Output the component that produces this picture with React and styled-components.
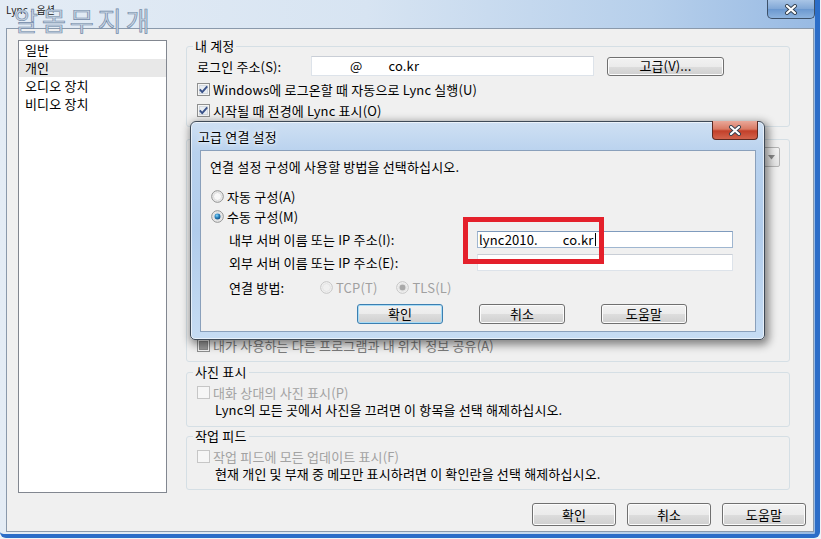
import styled, { createGlobalStyle } from "styled-components";

const GlobalStyle = createGlobalStyle`
  html, body { margin: 0; padding: 0; background: #eef3f8; }
  body {
    font-family: "Noto Sans CJK KR", "Noto Sans", sans-serif;
    font-size: 13px;
    letter-spacing: 0.15px;
    color: #000;
  }
  * { box-sizing: border-box; }
`;

const Screen = styled.div`
  position: relative;
  width: 821px;
  height: 539px;
  overflow: hidden;
  background: #eef3f8;
`;

const Window = styled.div`
  width: 820px;
  height: 538px;
  display: flex;
  flex-direction: column;
  background: linear-gradient(90deg, #e4ecf5 0%, #d7e4f2 45%, #b6cfeb 80%, #98bae3 100%);
  border-right: 5px solid #2b6dc8;
  border-bottom: 4px solid #2b6dc8;
  border-bottom-left-radius: 6px;
  border-bottom-right-radius: 6px;
`;

const TitleBar = styled.div`
  position: relative;
  height: 28px;
  display: flex;
  justify-content: space-between;
  align-items: flex-start;
`;

const TitleText = styled.div`
  padding: 4px 0 0 6px;
  font-size: 10px;
  line-height: 12px;
  color: #222;
`;

const Watermark = styled.div`
  position: absolute;
  left: 14px;
  top: 5px;
  font-size: 26px;
  line-height: 30px;
  letter-spacing: 4px;
  color: #c9d5e3;
  -webkit-text-stroke: 0.7px #7189a8;
  pointer-events: none;
`;

const WinClose = styled.div`
  width: 48px;
  height: 19px;
  border: 1px solid #3d5169;
  border-top: none;
  border-radius: 0 0 5px 5px;
  background: linear-gradient(#a9c5e6, #80a7d6 50%, #6b98cf 51%, #8db3de);
  display: flex;
  align-items: center;
  justify-content: center;
`;

const Client = styled.div`
  flex: 1;
  margin: 0 1px 2px 6px;
  border: 1px solid #8a99ab;
  background: #f0f0f0;
  display: flex;
  align-items: flex-start;
  gap: 19px;
  padding: 11px 6px 0 11px;
`;

const NavList = styled.div`
  width: 149px;
  height: 453px;
  border: 1px solid #828790;
  background: #fff;
`;

const NavItem = styled.div`
  height: 18px;
  line-height: 18px;
  padding-left: 6px;
  background: ${(p) => (p.$active ? "#e8e8e8" : "transparent")};
`;

const Content = styled.div`
  width: 620px;
  margin-top: -1px;
  display: flex;
  flex-direction: column;
`;

const Group = styled.fieldset`
  margin: ${(p) => p.$top || 0}px 16px 0 0;
  padding: ${(p) => p.$pad || "3px 9px 5px 10px"};
  border: 1px solid #d5dfe5;
  border-radius: 3px;
  min-inline-size: 0;
`;

const Legend = styled.legend`
  margin-left: -4px;
  padding: 0 2px;
  line-height: 14px;
`;

const FieldRow = styled.div`
  display: flex;
  align-items: center;
  height: ${(p) => p.$h || 20}px;
  margin-top: ${(p) => p.$mt || 0}px;
  padding-left: ${(p) => p.$indent || 0}px;
`;

const FieldLabel = styled.div`
  width: ${(p) => p.$w}px;
  flex: none;
  color: ${(p) => (p.$dim ? "#a0a0a0" : "#000")};
`;

const TextBox = styled.div`
  width: ${(p) => p.$w}px;
  height: ${(p) => p.$h}px;
  flex: none;
  background: #fff;
  border: 1px solid ${(p) => (p.$focus ? "#9fb6d0" : "#dde3ea")};
  border-top-color: ${(p) => (p.$focus ? "#7f9bbd" : "#c9ced6")};
  padding-left: ${(p) => p.$pad || 1}px;
  display: flex;
  align-items: center;
  line-height: 14px;
  white-space: pre;
`;

const Redact = styled.span`
  display: inline-block;
  width: ${(p) => p.$w}px;
`;

const Caret = styled.span`
  display: inline-block;
  width: 1px;
  height: 13px;
  margin-left: 1px;
  background: #000;
`;

const PushButton = styled.div`
  width: ${(p) => p.$w}px;
  height: ${(p) => p.$h || 23}px;
  flex: none;
  margin-left: ${(p) => p.$ml || 0}px;
  border: 1px solid ${(p) => (p.$focus ? "#3c7fb1" : "#707070")};
  border-radius: 3px;
  background: linear-gradient(#f2f2f2 0%, #ebebeb 50%, #dddddd 51%, #cfcfcf 100%);
  box-shadow: inset 0 0 0 1px ${(p) => (p.$focus ? "#a8dcf6" : "#fcfcfc")};
  display: flex;
  align-items: center;
  justify-content: center;
  line-height: 14px;
`;

const CheckRow = styled.div`
  display: flex;
  align-items: center;
  gap: 3px;
  height: ${(p) => p.$h || 21}px;
  margin-top: ${(p) => p.$mt || 0}px;
  color: ${(p) => (p.$dim ? "#a2a2a2" : p.$shade ? "#7c7c7c" : "#000")};
`;

const Note = styled.div`
  padding-left: 18px;
  line-height: 17px;
`;

const Spacer = styled.div`
  height: ${(p) => p.$h}px;
`;

const SelectRow = styled.div`
  display: flex;
  justify-content: flex-end;
`;

const Select = styled.div`
  width: 250px;
  height: 20px;
  border: 1px solid #b4b4b4;
  border-radius: 2px;
  background: linear-gradient(#f4f4f4, #e4e4e4);
  display: flex;
  justify-content: flex-end;
  align-items: center;
  padding-right: 3px;
`;

const ButtonRow = styled.div`
  display: flex;
  justify-content: flex-end;
  gap: 11px;
  margin-top: 13px;
`;

const Dialog = styled.div`
  position: absolute;
  left: 190px;
  top: 121px;
  width: 575px;
  height: 219px;
  border: 1px solid #3f4a57;
  border-radius: 6px 6px 5px 5px;
  background: linear-gradient(180deg, #cfe0f3 0%, #b9d2ee 14%, #b1cceb 50%, #c6dcf3 100%);
  box-shadow: 2px 3px 9px 2px rgba(0, 0, 0, 0.45), inset 0 0 0 1px rgba(255, 255, 255, 0.6);
  display: flex;
  flex-direction: column;
`;

const DialogTitle = styled.div`
  position: relative;
  height: 28px;
  display: flex;
  align-items: center;
  padding-left: 7px;
  text-shadow: 0 0 6px #fff, 0 0 3px #fff;
`;

const DialogClose = styled.div`
  position: absolute;
  top: -1px;
  right: 6px;
  width: 46px;
  height: 19px;
  border: 1px solid #5d2a22;
  border-top: none;
  border-radius: 0 0 4px 4px;
  background: linear-gradient(#e9a899 0%, #d97a64 45%, #c2402a 55%, #d2634c 100%);
  display: flex;
  align-items: center;
  justify-content: center;
`;

const DialogBody = styled.div`
  flex: 1;
  margin: 0 8px 7px 9px;
  border: 1px solid #8aa0bb;
  background: #f0f0f0;
  padding: 8px 0 0 9px;
  display: flex;
  flex-direction: column;
`;

const Line = styled.div`
  line-height: 16px;
`;

const RadioRow = styled.div`
  display: flex;
  align-items: center;
  gap: 3px;
  height: ${(p) => p.$h || 20}px;
  margin-top: ${(p) => p.$mt || 0}px;
  margin-left: ${(p) => p.$ml || 0}px;
  color: ${(p) => (p.$dim ? "#a0a0a0" : "#000")};
`;

const DialogButtons = styled.div`
  display: flex;
  gap: 36px;
  margin-top: 9px;
  padding-left: 147px;
`;

const Annotation = styled.div`
  position: absolute;
  left: 463px;
  top: 217px;
  width: 141px;
  height: 47px;
  border: 5px solid #e4202b;
  pointer-events: none;
`;

const CloseGlyph = ({ w = 14, h = 11 }) => (
  <svg width={w} height={h} viewBox="0 0 14 11">
    <path d="M3 2 L11 9 M11 2 L3 9" stroke="#33404f" strokeWidth="4" strokeLinecap="round" />
    <path d="M3 2 L11 9 M11 2 L3 9" stroke="#fff" strokeWidth="2.2" strokeLinecap="round" />
  </svg>
);

const CheckBox = ({ checked, disabled, mixed }) => (
  <svg width="13" height="13" viewBox="0 0 13 13">
    <rect x="0.5" y="0.5" width="12" height="12" fill="#f6f6f6" stroke={disabled ? "#c6c6c6" : "#8e8f8f"} />
    {!disabled && !mixed && <rect x="2.5" y="2.5" width="8" height="8" fill="#e9edf2" stroke="#d3d9e0" />}
    {mixed && <rect x="2.5" y="2.5" width="8" height="8" fill="#9a9a9a" stroke="#8a8a8a" />}
    {checked && (
      <path d="M2.8 6.4 L5.2 9.2 L10.2 3.3" fill="none" stroke="#3a528a" strokeWidth="1.9" strokeLinejoin="round" />
    )}
  </svg>
);

const Radio = ({ checked, disabled }) => (
  <svg width="13" height="13" viewBox="0 0 13 13">
    <defs>
      <radialGradient id="radioDot" cx="0.4" cy="0.35" r="0.7">
        <stop offset="0" stopColor="#8fdaf8" />
        <stop offset="0.45" stopColor="#2f8ac6" />
        <stop offset="1" stopColor="#0e4677" />
      </radialGradient>
    </defs>
    <circle cx="6.5" cy="6.5" r="5.8" fill={disabled ? "#f4f4f4" : "#eeeeee"} stroke={disabled ? "#c4c4c4" : "#8e8f8f"} />
    <circle cx="6.5" cy="6.5" r="4" fill={disabled ? "#f0f0f0" : "#f8f8f8"} stroke={disabled ? "#e0e0e0" : "#d6d6d6"} strokeWidth="0.8" />
    {checked && <circle cx="6.5" cy="6.5" r="3" fill={disabled ? "#a9a9a9" : "url(#radioDot)"} />}
  </svg>
);

const DropArrow = () => (
  <svg width="9" height="5" viewBox="0 0 9 5">
    <path d="M1 0 L8 0 L4.5 4.5 Z" fill="#8a8a8a" />
  </svg>
);

export default function App() {
  return (
    <Screen>
      <GlobalStyle />
      <Window>
        <TitleBar>
          <TitleText>Lync - 옵션</TitleText>
          <Watermark>알몸무지개</Watermark>
          <WinClose>
            <CloseGlyph />
          </WinClose>
        </TitleBar>
        <Client>
          <NavList>
            <NavItem>일반</NavItem>
            <NavItem $active>개인</NavItem>
            <NavItem>오디오 장치</NavItem>
            <NavItem>비디오 장치</NavItem>
          </NavList>
          <Content>
            <Group>
              <Legend>내 계정</Legend>
              <FieldRow>
                <FieldLabel $w={114}>로그인 주소(S):</FieldLabel>
                <TextBox $w={283} $h={20} $pad={2}>
                  <Redact $w={36} />@<Redact $w={26} />co.kr
                </TextBox>
                <PushButton $w={117} $h={19} $ml={13}>
                  고급(V)...
                </PushButton>
              </FieldRow>
              <CheckRow $mt={3}>
                <CheckBox checked />
                Windows에 로그온할 때 자동으로 Lync 실행(U)
              </CheckRow>
              <CheckRow>
                <CheckBox checked />
                시작될 때 전경에 Lync 표시(O)
              </CheckRow>
            </Group>

            <Group $top={12} $pad="7px 9px 5px 10px">
              <SelectRow>
                <Select>
                  <DropArrow />
                </Select>
              </SelectRow>
              <Spacer $h={168} />
              <CheckRow $shade>
                <CheckBox mixed />
                내가 사용하는 다른 프로그램과 내 위치 정보 공유(A)
              </CheckRow>
            </Group>

            <Group $top={3} $pad="4px 9px 8px 10px">
              <Legend>사진 표시</Legend>
              <CheckRow $h={18} $dim>
                <CheckBox disabled />
                대화 상대의 사진 표시(P)
              </CheckRow>
              <Note>Lync의 모든 곳에서 사진을 끄려면 이 항목을 선택 해제하십시오.</Note>
            </Group>

            <Group $top={2} $pad="4px 9px 7px 10px">
              <Legend>작업 피드</Legend>
              <CheckRow $h={18} $dim>
                <CheckBox disabled />
                작업 피드에 모든 업데이트 표시(F)
              </CheckRow>
              <Note>현재 개인 및 부재 중 메모만 표시하려면 이 확인란을 선택 해제하십시오.</Note>
            </Group>

            <ButtonRow>
              <PushButton $w={84}>확인</PushButton>
              <PushButton $w={84}>취소</PushButton>
              <PushButton $w={84}>도움말</PushButton>
            </ButtonRow>
          </Content>
        </Client>
      </Window>

      <Dialog>
        <DialogTitle>
          고급 연결 설정
          <DialogClose>
            <CloseGlyph />
          </DialogClose>
        </DialogTitle>
        <DialogBody>
          <Line>연결 설정 구성에 사용할 방법을 선택하십시오.</Line>
          <RadioRow $mt={11} $ml={1}>
            <Radio />
            자동 구성(A)
          </RadioRow>
          <RadioRow $ml={1}>
            <Radio checked />
            수동 구성(M)
          </RadioRow>
          <FieldRow $h={17} $mt={5} $indent={19}>
            <FieldLabel $w={248}>내부 서버 이름 또는 IP 주소(I):</FieldLabel>
            <TextBox $w={256} $h={17} $focus>
              lync2010.<Redact $w={25} />co.kr<Caret />
            </TextBox>
          </FieldRow>
          <FieldRow $h={17} $mt={6} $indent={19}>
            <FieldLabel $w={248}>외부 서버 이름 또는 IP 주소(E):</FieldLabel>
            <TextBox $w={256} $h={17} />
          </FieldRow>
          <FieldRow $h={16} $mt={8} $indent={19}>
            <FieldLabel $w={91}>연결 방법:</FieldLabel>
            <RadioRow $h={16} $dim>
              <Radio disabled />
              TCP(T)
            </RadioRow>
            <RadioRow $h={16} $ml={19} $dim>
              <Radio checked disabled />
              TLS(L)
            </RadioRow>
          </FieldRow>
          <DialogButtons>
            <PushButton $w={86} $h={20} $focus>
              확인
            </PushButton>
            <PushButton $w={86} $h={20}>
              취소
            </PushButton>
            <PushButton $w={86} $h={20}>
              도움말
            </PushButton>
          </DialogButtons>
        </DialogBody>
      </Dialog>

      <Annotation />
    </Screen>
  );
}
